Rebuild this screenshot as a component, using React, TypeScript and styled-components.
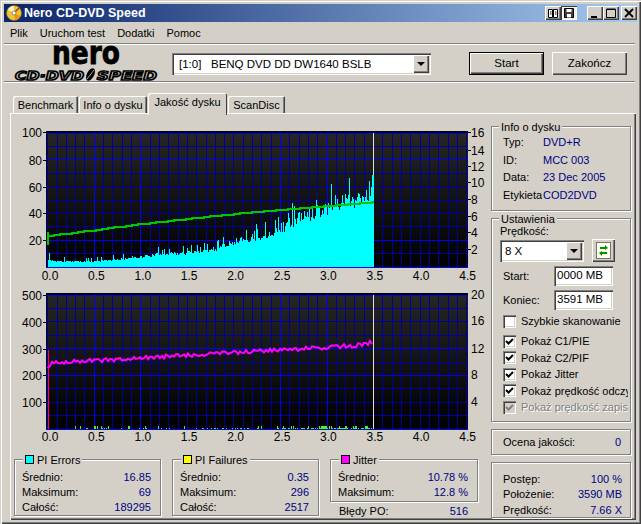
import * as React from 'react';
import styled, { createGlobalStyle, css } from 'styled-components';

const FACE = '#d4d0c8';
const NAVY = '#000080';

const GlobalStyle = createGlobalStyle`
  html, body { margin: 0; padding: 0; background: ${FACE}; }
  body { font-family: "Liberation Sans", Arial, sans-serif; font-size: 11px; color: #000; }
`;

const raised = css`
  background: ${FACE};
  box-shadow: inset 1px 1px 0 #fff, inset -1px -1px 0 #404040, inset -2px -2px 0 #808080;
`;

const sunken = css`
  background: #fff;
  box-shadow: inset 1px 1px 0 #808080, inset 2px 2px 0 #404040, inset -1px -1px 0 #fff, inset -2px -2px 0 ${FACE};
`;

const Window = styled.div`
  box-sizing: border-box;
  width: 641px;
  height: 524px;
  padding: 4px;
  display: flex;
  flex-direction: column;
  overflow: hidden;
  background: ${FACE};
  box-shadow: inset 1px 1px 0 ${FACE}, inset 2px 2px 0 #fff, inset -1px -1px 0 #404040, inset -2px -2px 0 #808080;
`;

const TitleBar = styled.div`
  height: 18px;
  display: flex;
  align-items: center;
  padding-left: 2px;
  background: linear-gradient(90deg, #0a246a 0%, #a6caf0 100%);
`;

const TitleText = styled.div`
  margin-left: 2px;
  color: #fff;
  font-weight: bold;
  font-size: 12.5px;
  flex: 1;
`;

const CaptionButton = styled.button<{ $gap?: number; $pressed?: boolean }>`
  width: 16px;
  height: 14px;
  padding: 0;
  border: 0;
  margin-left: ${p => p.$gap ?? 0}px;
  display: flex;
  align-items: center;
  justify-content: center;
  ${raised}
  ${p => p.$pressed && css`
    background: #f4f3f0;
    box-shadow: inset 1px 1px 0 #404040, inset -1px -1px 0 #fff;
  `}
`;

const MenuBar = styled.div`
  height: 21px;
  display: flex;
  align-items: center;
  gap: 12px;
  padding-left: 6px;
`;

const Etched = styled.div`
  height: 1px;
  margin: 0 2px 0 0;
  background: #808080;
  border-bottom: 1px solid #fff;
`;

const Toolbar = styled.div`
  height: 36px;
  display: flex;
  align-items: center;
  padding-left: 4px;
`;

const DriveSelect = styled.div`
  box-sizing: border-box;
  width: 259px;
  height: 22px;
  margin-left: 4px;
  margin-top: 1px;
  display: flex;
  align-items: center;
  padding: 2px 2px 2px 7px;
  font-size: 11.5px;
  white-space: pre;
  ${sunken}
`;

const SelectText = styled.span`
  flex: 1;
`;

const ArrowButton = styled.span`
  width: 16px;
  height: 100%;
  display: flex;
  align-items: center;
  justify-content: center;
  ${raised}
  &::after {
    content: '';
    border: 4px solid transparent;
    border-top: 4px solid #000;
    border-bottom: 0;
  }
`;

const PushButton = styled.button<{ $default?: boolean; $left: number }>`
  box-sizing: border-box;
  width: 75px;
  height: 23px;
  margin-left: ${p => p.$left}px;
  padding: 0;
  border: 0;
  font: inherit;
  font-size: 11.5px;
  color: #000;
  ${raised}
  ${p => p.$default && css`
    border: 1px solid #000;
  `}
`;

const TabStrip = styled.div`
  height: 20px;
  margin-top: 10px;
  padding-left: 9px;
  display: flex;
  align-items: flex-end;
  position: relative;
  z-index: 1;
`;

const Tab = styled.div<{ $width: number; $active?: boolean }>`
  box-sizing: border-box;
  width: ${p => p.$width}px;
  height: 17px;
  margin-right: 1px;
  display: flex;
  align-items: center;
  justify-content: center;
  border-radius: 2px 2px 0 0;
  background: ${FACE};
  box-shadow: inset 1px 1px 0 #fff, inset -1px 0 0 #404040, inset -2px 0 0 #808080;
  ${p => p.$active && css`
    height: 22px;
    margin-bottom: -2px;
    padding-bottom: 4px;
    box-shadow: inset 1px 1px 0 #fff, inset -1px 0 0 #404040;
  `}
`;

const TabPanel = styled.div`
  flex: 1;
  margin: 0 1px 0 6px;
  display: flex;
  padding: 1px 0 0 1px;
  background: ${FACE};
  box-shadow: inset 1px 1px 0 #fff, inset -1px -1px 0 #404040, inset -2px -2px 0 #808080;
`;

const LeftColumn = styled.div`
  width: 480px;
  padding-top: 10px;
  display: flex;
  flex-direction: column;
`;

const ChartSvg = styled.svg`
  display: block;
  width: 478px;
  height: 160px;
  margin-bottom: 2px;
`;

const StatsRow = styled.div`
  margin: 11px 0 0 3px;
  display: flex;
  gap: 11px;
`;

const Group = styled.div<{ $height?: number; $width?: number }>`
  box-sizing: border-box;
  position: relative;
  width: ${p => (p.$width ? `${p.$width}px` : 'auto')};
  height: ${p => (p.$height ? `${p.$height}px` : 'auto')};
  border: 1px solid #808080;
  box-shadow: inset 1px 1px 0 #fff, 1px 1px 0 #fff;
`;

const Legend = styled.div<{ $left?: number }>`
  position: absolute;
  top: -7px;
  left: ${p => p.$left ?? 7}px;
  height: 13px;
  padding: 0 2px;
  display: flex;
  align-items: center;
  gap: 3px;
  background: ${FACE};
`;

const Swatch = styled.span<{ $color: string }>`
  box-sizing: border-box;
  width: 9px;
  height: 9px;
  border: 1px solid #000;
  background: ${p => p.$color};
`;

const StatsBody = styled.div`
  padding: 9px 9px 0 7px;
`;

const StatRow = styled.div<{ $height?: number }>`
  height: ${p => p.$height ?? 15}px;
  display: flex;
  align-items: center;
  justify-content: space-between;
`;

const Value = styled.span`
  color: ${NAVY};
`;

const StatColumn = styled.div`
  width: 148px;
`;

const FooterRow = styled(StatRow)`
  margin-top: 1px;
  padding: 0 10px 0 9px;
`;

const RightColumn = styled.div`
  width: 140px;
  padding-top: 12px;
  display: flex;
  flex-direction: column;
  gap: 7px;
`;

const InfoBody = styled.div`
  padding: 6px 0 0 11px;
`;

const InfoRow = styled.div`
  height: 17.7px;
  display: grid;
  grid-template-columns: 40px 1fr;
  align-items: center;
  white-space: nowrap;
`;

const SettingsBody = styled.div`
  padding: 6px 2px 0 8px;
`;

const SpeedRow = styled.div`
  margin-top: 2px;
  display: flex;
  align-items: center;
  gap: 8px;
`;

const SpeedSelect = styled.div`
  box-sizing: border-box;
  width: 84px;
  height: 22px;
  display: flex;
  align-items: center;
  padding: 2px 2px 2px 5px;
  font-size: 11.5px;
  ${sunken}
`;

const RefreshButton = styled.div`
  width: 23px;
  height: 23px;
  display: flex;
  align-items: center;
  justify-content: center;
  ${raised}
`;

const FieldRow = styled.div`
  height: 20px;
  margin-top: 4px;
  padding-left: 3px;
  display: flex;
  align-items: center;
`;

const FieldLabel = styled.span`
  width: 51px;
`;

const Field = styled.div`
  box-sizing: border-box;
  width: 59px;
  height: 20px;
  padding: 3px 0 0 3px;
  font-size: 11.5px;
  ${sunken}
`;

const CheckRow = styled.div<{ $first?: boolean; $disabled?: boolean }>`
  height: 16.5px;
  margin-bottom: ${p => (p.$first ? 3.5 : 0)}px;
  padding-left: 3px;
  display: flex;
  align-items: center;
  gap: 5px;
  white-space: nowrap;
  overflow: hidden;
  ${p => p.$disabled && css`
    color: #808080;
    text-shadow: 1px 1px 0 #fff;
  `}
`;

const CheckBox = styled.span<{ $disabled?: boolean }>`
  flex: none;
  width: 13px;
  height: 13px;
  display: flex;
  align-items: center;
  justify-content: center;
  ${sunken}
  ${p => p.$disabled && css`background: ${FACE};`}
`;

const ChecksList = styled.div`
  margin-top: 3px;
`;

const ScoreBody = styled.div`
  height: 100%;
  padding: 0 9px 0 11px;
  display: flex;
  align-items: center;
  justify-content: space-between;
`;

const ProgressBody = styled.div`
  padding: 8px 8px 0 11px;
`;

const mulberry = (seed: number) => () => {
  seed = (seed + 0x6d2b79f5) | 0;
  let t = Math.imul(seed ^ (seed >>> 15), 1 | seed);
  t = (t + Math.imul(t ^ (t >>> 7), 61 | t)) ^ t;
  return ((t ^ (t >>> 14)) >>> 0) / 4294967296;
};

const interp = (pts: number[][], x: number) => {
  for (let i = 1; i < pts.length; i++) {
    if (x <= pts[i][0]) {
      const [x0, y0] = pts[i - 1];
      const [x1, y1] = pts[i];
      return y0 + ((y1 - y0) * (x - x0)) / (x1 - x0);
    }
  }
  return pts[pts.length - 1][1];
};

const BAR_ENVELOPE = [[48, 7], [60, 6], [94, 6], [120, 8], [140, 11], [165, 14], [190, 15], [215, 19], [233, 27], [250, 30], [265, 33], [280, 41], [300, 52], [326, 63], [345, 71], [360, 72], [370, 82], [373, 92]];
const SPEED_LINE = [[48, 236], [140, 224], [233, 214], [280, 210], [326, 206], [373, 202]];
const JITTER_LINE = [[48, 367], [52, 363], [140, 358], [233, 352.5], [280, 350], [326, 347.5], [350, 346], [373, 343]];

const buildBars = () => {
  const rnd = mulberry(11);
  let d = '';
  for (let x = 48; x < 374; x++) {
    const env = interp(BAR_ENVELOPE, x);
    let h = env * (0.82 + 0.26 * rnd());
    if (rnd() > 0.88) h += env * 0.28 + 2;
    if (x === 49) h = 14;
    if (x > 371) h = 92;
    d += `M${x} 267V${Math.round(267 - h)}H${x + 1}V267Z`;
  }
  return d;
};

const buildSpeed = () => {
  let d = 'M48 245V232M48 236';
  for (let x = 48; x < 374; x += 6) {
    d += `H${x}V${Math.round(interp(SPEED_LINE, x))}`;
  }
  return d + 'H374';
};

const buildJitter = () => {
  const rnd = mulberry(5);
  let d = 'M48 368';
  for (let x = 48; x < 374; x += 2) {
    const amp = x > 340 ? 5 : 4;
    d += `L${x} ${(interp(JITTER_LINE, x) + (rnd() - 0.5) * amp).toFixed(1)}`;
  }
  return d;
};

const buildLowDots = () => {
  const rnd = mulberry(23);
  let d = 'M321 429V426H327V429Z';
  for (let x = 68; x < 373; x += 1) {
    const dense = x > 280;
    if (rnd() > (dense ? 0.35 : 0.8)) d += `M${x} 429V${rnd() > 0.7 ? 426 : 428}H${x + 1}V429Z`;
  }
  return d;
};

const X_LABELS = ['0.0', '0.5', '1.0', '1.5', '2.0', '2.5', '3.0', '3.5', '4.0', '4.5'];
const BRIGHT_COLS = [5, 10, 25, 30];

type ChartProps = {
  originY: number;
  top: number;
  stepY: number;
  brightRows: number[];
  gradientId: string;
  leftLabels: [string, number][];
  rightLabels: [string, number][];
  rightTicks?: boolean;
  labelY: number;
  children: React.ReactNode;
};

const Chart: React.FC<ChartProps> = ({ originY, top, stepY, brightRows, gradientId, leftLabels, rightLabels, rightTicks, labelY, children }) => {
  const bottom = top + stepY * 10;
  const cols = Array.from({ length: 46 }, (_, i) => i);
  const rows = Array.from({ length: 11 }, (_, i) => i);
  const textProps = { fontFamily: '"Liberation Sans", Arial, sans-serif', fontSize: 12, fill: '#000' };
  return (
    <ChartSvg viewBox={`11 ${originY} 478 160`}>
      <defs>
        <linearGradient id={gradientId} x1="0" y1="0" x2="0" y2="1">
          <stop offset="0" stopColor="#262626" />
          <stop offset="1" stopColor="#000" />
        </linearGradient>
      </defs>
      <rect x={46} y={top - 2} width={422} height={bottom - top + 3} fill={`url(#${gradientId})`} />
      <rect x={46} y={top - 2} width={422} height={2} fill="#000" />
      <rect x={46} y={top} width={2} height={bottom - top} fill="#000" />
      <g shapeRendering="crispEdges">
        {rows.map(r => (
          <rect key={r} x={46} y={Math.floor(top + r * stepY)} width={422} height={1} fill={brightRows.includes(r) ? '#0000ff' : '#00009c'} />
        ))}
        {cols.map(c => (
          <rect key={c} x={Math.floor(47.75 + c * 9.31)} y={top} width={1} height={bottom - top} fill={BRIGHT_COLS.includes(c) ? '#0000ff' : '#00009c'} />
        ))}
      </g>
      {children}
      {leftLabels.map(([t, y]) => (
        <g key={t}>
          <text x={42} y={y + 4.5} textAnchor="end" {...textProps}>{t}</text>
          <rect x={43} y={y} width={3} height={1} fill="#000" />
        </g>
      ))}
      {rightLabels.map(([t, y]) => (
        <g key={t}>
          <text x={471} y={y + 4.5} {...textProps}>{t}</text>
          {rightTicks && <rect x={468} y={y} width={3} height={1} fill="#000" />}
        </g>
      ))}
      {X_LABELS.map((t, i) => (
        <text key={t} x={50 + i * 46.4} y={labelY} textAnchor="middle" {...textProps}>{t}</text>
      ))}
    </ChartSvg>
  );
};

const CheckMark: React.FC<{ color?: string }> = ({ color = '#000' }) => (
  <svg width="9" height="9" viewBox="0 0 9 9">
    <path d="M1 4l2.5 2.5L8 2" fill="none" stroke={color} strokeWidth="2" />
  </svg>
);

const Logo = () => (
  <svg width="160" height="36" viewBox="8 45 160 36">
    <text x={52} y={64} fontFamily='"DejaVu Sans", sans-serif' fontWeight="bold" fontSize={32} textLength={68} lengthAdjust="spacingAndGlyphs" stroke="#000" strokeWidth={0.8}>nero</text>
    <g fontFamily='"DejaVu Sans", sans-serif' fontWeight="bold" fontStyle="italic" fontSize={13} fill={FACE} stroke="#000" strokeWidth={1.5}>
      <text x={15} y={79.5} textLength={69} lengthAdjust="spacingAndGlyphs">CD·DVD</text>
      <text x={97} y={79.5} textLength={60} lengthAdjust="spacingAndGlyphs">SPEED</text>
    </g>
    <ellipse cx={90.5} cy={74.5} rx={3.6} ry={6.8} transform="rotate(28 90.5 74.5)" fill="#000" />
    <path d="M87 79L94 70" stroke={FACE} strokeWidth={0.8} />
  </svg>
);

const AppIcon = () => (
  <svg width="16" height="16" viewBox="0 0 16 16">
    <circle cx="8" cy="8" r="7.5" fill="#f2c230" stroke="#8a6a10" strokeWidth="0.6" />
    <path d="M8 8L2 5A7 7 0 0 1 8 1Z" fill="#f7f1c8" />
    <path d="M8 8L14 11A7 7 0 0 1 9 15Z" fill="#e89020" />
    <path d="M8 8L13 3" stroke="#c02020" strokeWidth="1.2" />
    <circle cx="8" cy="8" r="2" fill="#fff" stroke="#555" strokeWidth="0.6" />
  </svg>
);

const topLeft: [string, number][] = [['100', 132], ['80', 160], ['60', 187], ['40', 213], ['20', 240]];
const topRight: [string, number][] = [['16', 132], ['14', 150], ['12', 166], ['10', 182], ['8', 199], ['6', 216], ['4', 232], ['2', 249]];
const bottomLeft: [string, number][] = [['500', 295], ['400', 322], ['300', 349], ['200', 375], ['100', 402]];
const bottomRight: [string, number][] = [['20', 294], ['16', 320], ['12', 348], ['8', 374], ['4', 401]];

const checks = ['Pokaż C1/PIE', 'Pokaż C2/PIF', 'Pokaż Jitter', 'Pokaż prędkość odczytu'];

const App: React.FC = () => {
  const bars = React.useMemo(buildBars, []);
  const speed = React.useMemo(buildSpeed, []);
  const jitter = React.useMemo(buildJitter, []);
  const dots = React.useMemo(buildLowDots, []);

  return (
    <Window>
      <GlobalStyle />
      <TitleBar>
        <AppIcon />
        <TitleText>Nero CD-DVD Speed</TitleText>
        <CaptionButton>
          <svg width="10" height="10" viewBox="0 0 10 10">
            <path d="M.5 1.5h4v8h-4zM5.5 1.5h4v8h-4zM2 4h1.5M2 6h1.5M7 4h1.5M7 6h1.5" fill="#fff" stroke="#000" />
          </svg>
        </CaptionButton>
        <CaptionButton $pressed>
          <svg width="10" height="10" viewBox="0 0 10 10">
            <path d="M.5.5h9v9h-9z" fill="#404040" stroke="#000" />
            <path d="M2.5 1h5v3h-5zM3 6h4v3.500H3z" fill="#fff" />
          </svg>
        </CaptionButton>
        <CaptionButton $gap={10}>
          <svg width="10" height="10" viewBox="0 0 10 10"><path d="M1 8h6v2H1z" /></svg>
        </CaptionButton>
        <CaptionButton>
          <svg width="10" height="10" viewBox="0 0 10 10"><path d="M.5 1.500h9v8h-9zM.5 1h9" fill="none" stroke="#000" /></svg>
        </CaptionButton>
        <CaptionButton $gap={2}>
          <svg width="10" height="10" viewBox="0 0 10 10"><path d="M1 1l8 8M9 1L1 9" stroke="#000" strokeWidth="1.800" /></svg>
        </CaptionButton>
      </TitleBar>
      <MenuBar>
        <span>Plik</span>
        <span>Uruchom test</span>
        <span>Dodatki</span>
        <span>Pomoc</span>
      </MenuBar>
      <Etched />
      <Toolbar>
        <Logo />
        <DriveSelect>
          <SelectText>[1:0]   BENQ DVD DD DW1640 BSLB</SelectText>
          <ArrowButton />
        </DriveSelect>
        <PushButton $default $left={38}>Start</PushButton>
        <PushButton $left={8}>Zakończ</PushButton>
      </Toolbar>
      <Etched />
      <TabStrip>
        <Tab $width={65}>Benchmark</Tab>
        <Tab $width={68}>Info o dysku</Tab>
        <Tab $width={79} $active>Jakość dysku</Tab>
        <Tab $width={57}>ScanDisc</Tab>
      </TabStrip>
      <TabPanel>
        <LeftColumn>
          <Chart originY={124} top={133} stepY={13.4} brightRows={[0, 2, 8, 10]} gradientId="topBg" leftLabels={topLeft} rightLabels={topRight} rightTicks labelY={280}>
            <path d={bars} fill="#00ffff" shapeRendering="crispEdges" />
            <rect x={373} y={133} width={1} height={42} fill="#e0e0e0" />
            <path d={speed} fill="none" stroke="#00c800" strokeWidth={1.5} shapeRendering="crispEdges" />
          </Chart>
          <Chart originY={286} top={295} stepY={13.4} brightRows={[0, 4, 6, 10]} gradientId="bottomBg" leftLabels={bottomLeft} rightLabels={bottomRight} labelY={441}>
            <rect x={373} y={295} width={1} height={134} fill="#e0e0e0" />
            <rect x={48} y={350} width={1} height={79} fill="#ff0060" />
            <path d={dots} fill="#40ff00" shapeRendering="crispEdges" />
            <path d={jitter} fill="none" stroke="#ff00ff" strokeWidth={2} />
          </Chart>
          <StatsRow>
            <Group $width={147} $height={57}>
              <Legend $left={8}><Swatch $color="#00ffff" />PI Errors</Legend>
              <StatsBody>
                <StatRow><span>Średnio:</span><Value>16.85</Value></StatRow>
                <StatRow><span>Maksimum:</span><Value>69</Value></StatRow>
                <StatRow><span>Całość:</span><Value>189295</Value></StatRow>
              </StatsBody>
            </Group>
            <Group $width={147} $height={57}>
              <Legend $left={8}><Swatch $color="#ffff00" />PI Failures</Legend>
              <StatsBody>
                <StatRow><span>Średnio:</span><Value>0.35</Value></StatRow>
                <StatRow><span>Maksimum:</span><Value>296</Value></StatRow>
                <StatRow><span>Całość:</span><Value>2517</Value></StatRow>
              </StatsBody>
            </Group>
            <StatColumn>
              <Group $height={43}>
                <Legend $left={8}><Swatch $color="#ff00ff" />Jitter</Legend>
                <StatsBody>
                  <StatRow><span>Średnio:</span><Value>10.78 %</Value></StatRow>
                  <StatRow><span>Maksimum:</span><Value>12.8 %</Value></StatRow>
                </StatsBody>
              </Group>
              <FooterRow><span>Błędy PO:</span><Value>516</Value></FooterRow>
            </StatColumn>
          </StatsRow>
        </LeftColumn>
        <RightColumn>
          <Group $height={85}>
            <Legend>Info o dysku</Legend>
            <InfoBody>
              <InfoRow><span>Typ:</span><Value>DVD+R</Value></InfoRow>
              <InfoRow><span>ID:</span><Value>MCC 003</Value></InfoRow>
              <InfoRow><span>Data:</span><Value>23 Dec 2005</Value></InfoRow>
              <InfoRow><span>Etykieta</span><Value>COD2DVD</Value></InfoRow>
            </InfoBody>
          </Group>
          <Group $height={204}>
            <Legend>Ustawienia</Legend>
            <SettingsBody>
              <div>Prędkość:</div>
              <SpeedRow>
                <SpeedSelect>
                  <SelectText>8 X</SelectText>
                  <ArrowButton />
                </SpeedSelect>
                <RefreshButton>
                  <svg width="15" height="17" viewBox="0 0 15 17">
                    <rect x=".5" y=".5" width="14" height="16" fill="#fffff0" stroke="#000" strokeDasharray="1 1" />
                    <path d="M4 7V5h5V3l3 3-3 2V7zM11 10v2H6v2l-3-3 3-2v1z" fill="#009000" />
                  </svg>
                </RefreshButton>
              </SpeedRow>
              <FieldRow><FieldLabel>Start:</FieldLabel><Field>0000 MB</Field></FieldRow>
              <FieldRow><FieldLabel>Koniec:</FieldLabel><Field>3591 MB</Field></FieldRow>
              <ChecksList>
                <CheckRow $first><CheckBox />Szybkie skanowanie</CheckRow>
                {checks.map(label => (
                  <CheckRow key={label}><CheckBox><CheckMark /></CheckBox>{label}</CheckRow>
                ))}
                <CheckRow $disabled><CheckBox $disabled><CheckMark color="#808080" /></CheckBox>Pokaż prędkość zapisu</CheckRow>
              </ChecksList>
            </SettingsBody>
          </Group>
          <Group $height={26}>
            <ScoreBody><span>Ocena jakości:</span><Value>0</Value></ScoreBody>
          </Group>
          <Group $height={56}>
            <ProgressBody>
              <StatRow $height={15.5}><span>Postęp:</span><Value>100 %</Value></StatRow>
              <StatRow $height={15.5}><span>Położenie:</span><Value>3590 MB</Value></StatRow>
              <StatRow $height={15.5}><span>Prędkość:</span><Value>7.66 X</Value></StatRow>
            </ProgressBody>
          </Group>
        </RightColumn>
      </TabPanel>
    </Window>
  );
};

export default App;
